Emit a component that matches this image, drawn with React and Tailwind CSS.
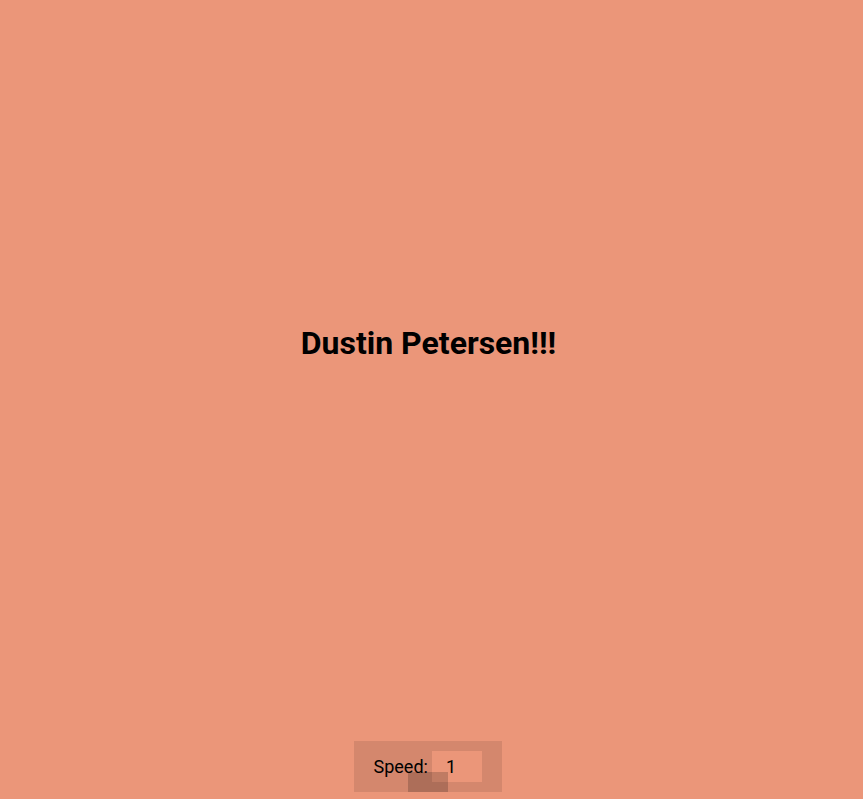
export default function App() {
  return (
    <div
      className="h-[799px] bg-[#eb9679] flex flex-col items-center overflow-hidden"
      style={{ fontFamily: "Roboto, 'Noto Sans', sans-serif" }}
    >
      <div className="flex-1 flex items-center justify-center pb-[56px] pr-[6px] w-full">
        <h1 className="text-[32px] font-bold text-black">Dustin Petersen!!!</h1>
      </div>
      <div className="relative mb-[7px] mr-[8px] flex items-center h-[51px] w-[148px] bg-[#d4876d] pl-[20px]">
        <span className="text-[18px] text-black">Speed:</span>
        <div className="ml-[4px] h-[31px] w-[50px] bg-[#eb9679] pl-[14px] flex items-center text-[18px] text-black">
          1
        </div>
        <div className="absolute left-[54px] top-[31px] w-[40px] h-[20px] bg-black/[0.18]"></div>
      </div>
    </div>
  );
}
